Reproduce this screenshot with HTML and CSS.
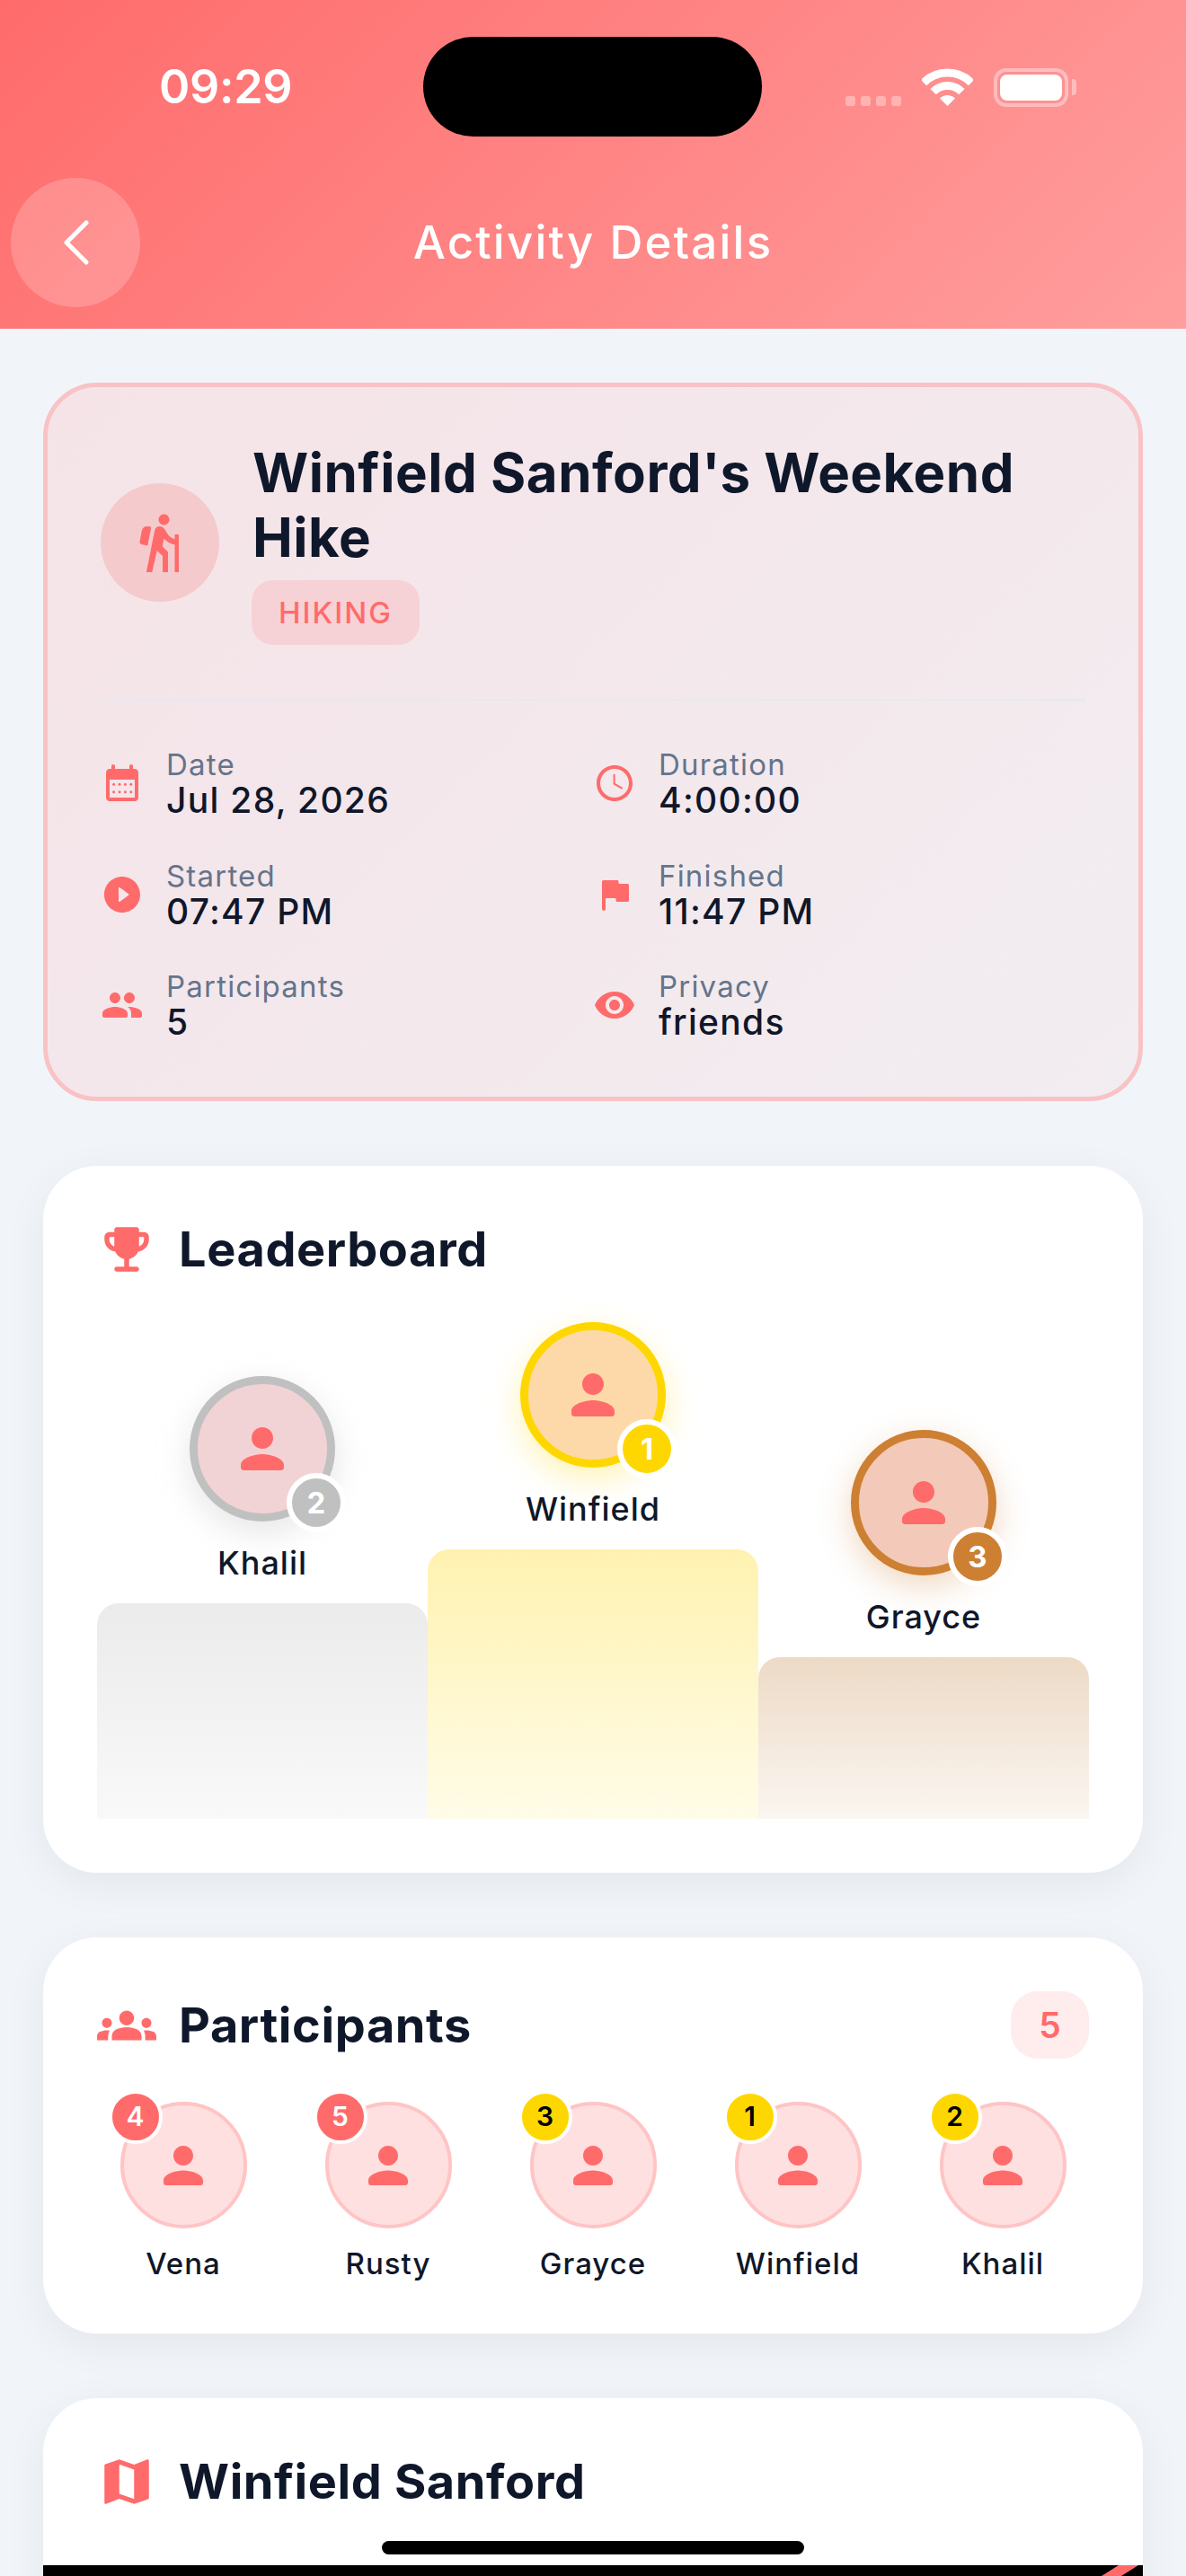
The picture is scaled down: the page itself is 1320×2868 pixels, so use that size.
FILE: index.html
```html
<!DOCTYPE html>
<html lang="en">
  <head>
    <meta charset="UTF-8" />
    <meta name="viewport" content="width=device-width, initial-scale=1.0" />
    <title>Activity Details</title>
    <link rel="stylesheet" href="styles.css">
  </head>
  <body>
    <div class="screen">
      <header class="top">
        <div class="status">
          <span class="time">09:29</span>
          <div class="status-icons">
            <div class="signal"><i></i><i></i><i></i><i></i></div>
            <svg class="wifi" viewBox="0 0 57 42" width="57" height="42">
              <path d="M2 16a37.5 37.5 0 0 1 53 0" fill="none" stroke="#fff" stroke-width="9"/>
              <path d="M12.6 26.100a22.500 22.500 0 0 1 31.800 0" fill="none" stroke="#fff" stroke-width="9"/>
              <path d="M28.500 42L20 33.500a12 12 0 0 1 17 0z" fill="#fff"/>
            </svg>
            <div class="battery"><div class="battery-fill"></div></div>
            <div class="battery-nub"></div>
          </div>
        </div>
        <div class="island"></div>
        <nav class="nav">
          <button class="back" type="button" aria-label="Back">
            <svg viewBox="0 0 144 144" width="144" height="144">
              <path d="M84 50L62 72l22 22" fill="none" stroke="#fff" stroke-width="5" stroke-linecap="round" stroke-linejoin="round"/>
            </svg>
          </button>
          <h1 class="nav-title">Activity Details</h1>
        </nav>
      </header>

      <main class="content">
        <section class="hero">
          <div class="hero-head">
            <div class="hero-icon">
              <svg viewBox="0 0 24 24" width="72" height="72"><path d="M13.500 5.500c1.100 0 2-.9 2-2s-.9-2-2-2-2 .9-2 2 .9 2 2 2zM17.500 10.780c-1.230-.37-2.220-1.170-2.800-2.180l-1-1.600c-.41-.65-1.110-1-1.840-1-.78 0-1.590.5-1.780 1.440S7 23 7 23h2.100l1.800-8 2.100 2v6h2v-7.500l-2.100-2 .6-3c1 1.150 2.410 2.010 4 2.340V23H19V9h-1.500v1.780zM7.430 13.130l-2.120-.41c-.54-.11-.9-.63-.79-1.170l.76-3.930c.21-1.080 1.260-1.790 2.340-1.580l1.160.23-1.350 6.860z"/></svg>
            </div>
            <div class="hero-text">
              <h2 class="hero-title">Winfield Sanford's Weekend Hike</h2>
              <span class="type-badge">HIKING</span>
            </div>
          </div>
          <div class="hero-grid">
            <div class="fact">
              <svg viewBox="0 0 24 24" width="48" height="48"><path fill-rule="evenodd" d="M19 4h-1V2.500a1 1 0 0 0-2 0V4H8V2.500a1 1 0 0 0-2 0V4H5c-1.110 0-2 .9-2 2v14c0 1.100.89 2 2 2h14c1.100 0 2-.9 2-2V6c0-1.100-.9-2-2-2zm0 16H5V10h14v10z"/><circle cx="7.300" cy="12.600" r=".75"/><circle cx="10.500" cy="12.600" r=".75"/><circle cx="13.700" cy="12.600" r=".75"/><circle cx="16.900" cy="12.600" r=".75"/><circle cx="7.300" cy="16.900" r=".75"/><circle cx="10.500" cy="16.900" r=".75"/><circle cx="13.700" cy="16.900" r=".75"/><circle cx="16.900" cy="16.900" r=".75"/></svg>
              <div><div class="fact-label">Date</div><div class="fact-value">Jul 28, 2026</div></div>
            </div>
            <div class="fact">
              <svg viewBox="0 0 24 24" width="48" height="48"><path d="M11.990 2C6.470 2 2 6.480 2 12s4.470 10 9.990 10C17.520 22 22 17.520 22 12S17.520 2 11.990 2zM12 20c-4.420 0-8-3.580-8-8s3.580-8 8-8 8 3.580 8 8-3.580 8-8 8zm.3-13h-1v5.600l4.700 2.800.6-.9-4.300-2.500z"/></svg>
              <div><div class="fact-label">Duration</div><div class="fact-value">4:00:00</div></div>
            </div>
            <div class="fact">
              <svg viewBox="0 0 24 24" width="48" height="48"><path d="M12 2C6.480 2 2 6.480 2 12s4.480 10 10 10 10-4.480 10-10S17.520 2 12 2zm-2 13.500v-7c0-.4.460-.63.800-.4l4.700 3.500c.27.2.27.6 0 .8l-4.700 3.500c-.34.23-.8 0-.8-.4z"/></svg>
              <div><div class="fact-label">Started</div><div class="fact-value">07:47 PM</div></div>
            </div>
            <div class="fact">
              <svg viewBox="0 0 24 24" width="48" height="48"><path d="M14.400 6L14 4H5.800a.8.8 0 0 0-.8.800V20a1 1 0 0 0 2 0v-6h5.600l.4 2h6.200a.8.8 0 0 0 .8-.8V6.800a.8.8 0 0 0-.8-.8z"/></svg>
              <div><div class="fact-label">Finished</div><div class="fact-value">11:47 PM</div></div>
            </div>
            <div class="fact">
              <svg viewBox="0 0 24 24" width="48" height="48"><path d="M16 11c1.660 0 2.990-1.340 2.990-3S17.660 5 16 5c-1.660 0-3 1.340-3 3s1.340 3 3 3zm-8 0c1.660 0 2.990-1.340 2.990-3S9.660 5 8 5C6.340 5 5 6.340 5 8s1.340 3 3 3zm0 2c-2.330 0-7 1.170-7 3.500V18c0 .55.45 1 1 1h12c.55 0 1-.45 1-1v-1.500c0-2.330-4.670-3.500-7-3.500zm8 0c-.29 0-.62.02-.97.05 1.160.84 1.970 1.970 1.970 3.450V19h5c.55 0 1-.45 1-1v-1.500c0-2.330-4.670-3.500-7-3.500z"/></svg>
              <div><div class="fact-label">Participants</div><div class="fact-value">5</div></div>
            </div>
            <div class="fact">
              <svg viewBox="0 0 24 24" width="48" height="48"><path d="M12 4.500C7 4.500 2.730 7.610 1 12c1.730 4.390 6 7.500 11 7.500s9.270-3.110 11-7.500c-1.730-4.390-6-7.500-11-7.500zM12 17c-2.760 0-5-2.240-5-5s2.240-5 5-5 5 2.240 5 5-2.240 5-5 5zm0-8c-1.660 0-3 1.340-3 3s1.340 3 3 3 3-1.340 3-3-1.340-3-3-3z"/></svg>
              <div><div class="fact-label">Privacy</div><div class="fact-value">friends</div></div>
            </div>
          </div>
        </section>

        <section class="card">
          <div class="card-head">
            <svg viewBox="0 0 24 24" width="66" height="66"><path d="M19 5h-2V4c0-.55-.45-1-1-1H8c-.55 0-1 .45-1 1v1H5c-1.100 0-2 .9-2 2v1c0 2.550 1.920 4.630 4.390 4.940.63 1.500 1.980 2.630 3.610 2.960V19H8c-.55 0-1 .45-1 1s.45 1 1 1h8c.55 0 1-.45 1-1s-.45-1-1-1h-3v-3.100c1.630-.33 2.980-1.460 3.610-2.960C19.080 12.630 21 10.550 21 8V7c0-1.100-.9-2-2-2zM5 8V7h2v3.820C5.840 10.400 5 9.300 5 8zm14 0c0 1.300-.84 2.400-2 2.820V7h2v1z"/></svg>
            <h2>Leaderboard</h2>
          </div>
          <div class="podium">
            <div class="step silver">
              <div class="lead-avatar">
                <svg viewBox="0 0 24 24" width="72" height="72"><path d="M12 12c2.210 0 4-1.790 4-4s-1.790-4-4-4-4 1.790-4 4 1.790 4 4 4zm0 2c-2.670 0-8 1.340-8 4v1c0 .55.45 1 1 1h14c.55 0 1-.45 1-1v-1c0-2.660-5.330-4-8-4z"/></svg>
                <span class="lead-rank">2</span>
              </div>
              <div class="lead-name">Khalil</div>
              <div class="bar"></div>
            </div>
            <div class="step gold">
              <div class="lead-avatar">
                <svg viewBox="0 0 24 24" width="72" height="72"><path d="M12 12c2.210 0 4-1.790 4-4s-1.790-4-4-4-4 1.790-4 4 1.790 4 4 4zm0 2c-2.670 0-8 1.340-8 4v1c0 .55.45 1 1 1h14c.55 0 1-.45 1-1v-1c0-2.660-5.330-4-8-4z"/></svg>
                <span class="lead-rank">1</span>
              </div>
              <div class="lead-name">Winfield</div>
              <div class="bar"></div>
            </div>
            <div class="step bronze">
              <div class="lead-avatar">
                <svg viewBox="0 0 24 24" width="72" height="72"><path d="M12 12c2.210 0 4-1.790 4-4s-1.790-4-4-4-4 1.790-4 4 1.790 4 4 4zm0 2c-2.670 0-8 1.340-8 4v1c0 .55.45 1 1 1h14c.55 0 1-.45 1-1v-1c0-2.660-5.330-4-8-4z"/></svg>
                <span class="lead-rank">3</span>
              </div>
              <div class="lead-name">Grayce</div>
              <div class="bar"></div>
            </div>
          </div>
        </section>

        <section class="card">
          <div class="card-head people-head">
            <svg viewBox="0 0 24 24" width="66" height="66"><path d="M4 13c1.100 0 2-.9 2-2 0-1.100-.9-2-2-2s-2 .9-2 2c0 1.100.9 2 2 2zm1.130 1.100c-.37-.06-.74-.1-1.130-.1-.99 0-1.930.21-2.780.58C.48 14.900 0 15.620 0 16.430V18h4.500v-1.610c0-.83.23-1.610.63-2.290zM20 13c1.100 0 2-.9 2-2 0-1.100-.9-2-2-2s-2 .9-2 2c0 1.100.9 2 2 2zm4 3.430c0-.81-.48-1.530-1.220-1.850-.85-.37-1.790-.58-2.780-.58-.39 0-.76.04-1.130.1.4.68.63 1.460.63 2.290V18H24v-1.570zm-7.760-2.780c-1.170-.52-2.610-.9-4.240-.9-1.630 0-3.070.39-4.240.9C6.680 14.130 6 15.210 6 16.390V18h12v-1.610c0-1.180-.68-2.260-1.760-2.740zM12 12c1.660 0 3-1.340 3-3s-1.340-3-3-3-3 1.340-3 3 1.340 3 3 3z"/></svg>
            <h2>Participants</h2>
            <span class="count">5</span>
          </div>
          <div class="people">
            <div class="person">
              <div class="person-avatar">
                <svg viewBox="0 0 24 24" width="66" height="66"><path d="M12 12c2.210 0 4-1.790 4-4s-1.790-4-4-4-4 1.790-4 4 1.790 4 4 4zm0 2c-2.670 0-8 1.340-8 4v1c0 .55.45 1 1 1h14c.55 0 1-.45 1-1v-1c0-2.660-5.330-4-8-4z"/></svg>
                <span class="person-rank">4</span>
              </div>
              <div class="person-name">Vena</div>
            </div>
            <div class="person">
              <div class="person-avatar">
                <svg viewBox="0 0 24 24" width="66" height="66"><path d="M12 12c2.210 0 4-1.790 4-4s-1.790-4-4-4-4 1.790-4 4 1.790 4 4 4zm0 2c-2.670 0-8 1.340-8 4v1c0 .55.45 1 1 1h14c.55 0 1-.45 1-1v-1c0-2.660-5.330-4-8-4z"/></svg>
                <span class="person-rank">5</span>
              </div>
              <div class="person-name">Rusty</div>
            </div>
            <div class="person">
              <div class="person-avatar">
                <svg viewBox="0 0 24 24" width="66" height="66"><path d="M12 12c2.210 0 4-1.790 4-4s-1.790-4-4-4-4 1.790-4 4 1.790 4 4 4zm0 2c-2.670 0-8 1.340-8 4v1c0 .55.45 1 1 1h14c.55 0 1-.45 1-1v-1c0-2.660-5.330-4-8-4z"/></svg>
                <span class="person-rank top3">3</span>
              </div>
              <div class="person-name">Grayce</div>
            </div>
            <div class="person">
              <div class="person-avatar">
                <svg viewBox="0 0 24 24" width="66" height="66"><path d="M12 12c2.210 0 4-1.790 4-4s-1.790-4-4-4-4 1.790-4 4 1.790 4 4 4zm0 2c-2.670 0-8 1.340-8 4v1c0 .55.45 1 1 1h14c.55 0 1-.45 1-1v-1c0-2.660-5.330-4-8-4z"/></svg>
                <span class="person-rank top3">1</span>
              </div>
              <div class="person-name">Winfield</div>
            </div>
            <div class="person">
              <div class="person-avatar">
                <svg viewBox="0 0 24 24" width="66" height="66"><path d="M12 12c2.210 0 4-1.790 4-4s-1.790-4-4-4-4 1.790-4 4 1.790 4 4 4zm0 2c-2.670 0-8 1.340-8 4v1c0 .55.45 1 1 1h14c.55 0 1-.45 1-1v-1c0-2.660-5.330-4-8-4z"/></svg>
                <span class="person-rank top3">2</span>
              </div>
              <div class="person-name">Khalil</div>
            </div>
          </div>
        </section>

        <section class="card map-card">
          <div class="card-head">
            <svg viewBox="0 0 24 24" width="66" height="66"><path d="M20.500 3l-.16.03L15 5.100 9 3 3.360 4.900c-.21.07-.36.25-.36.48V20.500c0 .28.22.5.5.5l.16-.03L9 18.900l6 2.100 5.640-1.900c.21-.07.36-.25.36-.48V3.500c0-.28-.22-.5-.5-.5zM15 19l-6-2.110V5l6 2.110V19z"/></svg>
            <h2>Winfield Sanford</h2>
          </div>
          <div class="map">
            <svg class="route" viewBox="0 0 1224 12" width="1224" height="12"><path d="M1197 0h22l-19 12h-22z" fill="#ff6b6b"/></svg>
          </div>
        </section>
      </main>

      <div class="home-bar"></div>
    </div>
  </body>
</html>
```

FILE: styles.css
```css
* {
  box-sizing: border-box;
}
html,
body {
  margin: 0;
  padding: 0;
}
body {
  font-family: Inter, "Noto Sans", sans-serif;
  color: #0f172a;
  background: #f1f5f9;
}
h1,
h2 {
  margin: 0;
}
svg {
  display: block;
  flex: none;
  fill: #ff6b6b;
}
.screen {
  position: relative;
  width: 1320px;
  height: 2868px;
  overflow: hidden;
  background: #f1f5f9;
}

/* header + status bar */
.top {
  height: 366px;
  background: linear-gradient(135deg, #ff6b6b, #ff9e9e);
  color: #fff;
}
.status {
  display: flex;
  align-items: center;
  height: 198px;
  padding: 0 122px 4px 177px;
}
.time {
  font-size: 52px;
  font-weight: 600;
  letter-spacing: -0.3px;
  line-height: 60px;
}
.status-icons {
  display: flex;
  align-items: center;
  margin-left: auto;
}
.signal {
  display: flex;
  align-self: flex-end;
  gap: 6px;
  margin: 0 23px 1px 0;
  opacity: 0.35;
}
.signal i {
  display: block;
  width: 11px;
  height: 11px;
  border-radius: 3px;
  background: #fff;
}
.wifi {
  fill: #fff;
}
.battery {
  width: 83px;
  height: 43px;
  margin-left: 23px;
  padding: 3px;
  border: 4px solid rgba(255, 255, 255, 0.4);
  border-radius: 14px;
}
.battery-fill {
  width: 100%;
  height: 100%;
  border-radius: 8px;
  background: #fff;
}
.battery-nub {
  width: 5px;
  height: 18px;
  margin-left: 4px;
  border-radius: 0 4px 4px 0;
  background: rgba(255, 255, 255, 0.4);
}
.island {
  position: absolute;
  top: 41px;
  left: 471px;
  width: 377px;
  height: 111px;
  border-radius: 56px;
  background: #000;
}
.nav {
  display: grid;
  grid-template-columns: 144px 1fr 144px;
  align-items: center;
  padding: 0 12px;
}
.back {
  width: 144px;
  height: 144px;
  padding: 0;
  border: 0;
  border-radius: 50%;
  background: rgba(255, 255, 255, 0.2);
}
.nav-title {
  font-size: 51px;
  font-weight: 500;
  letter-spacing: 2.2px;
  line-height: 60px;
  text-align: center;
}

.content {
  display: flex;
  flex-direction: column;
  gap: 72px;
  padding: 60px 48px;
}

/* activity summary */
.hero {
  padding: 59px;
  border: 5px solid #f9c2c5;
  border-radius: 60px;
  background: linear-gradient(135deg, #f5e3e7, #f2edf1);
}
.hero-head {
  display: flex;
  align-items: center;
  gap: 36px;
  padding-bottom: 60px;
  border-bottom: 3px solid #e9e9ef;
}
.hero-icon {
  display: flex;
  align-items: center;
  justify-content: center;
  flex: none;
  width: 132px;
  height: 132px;
  border-radius: 50%;
  background: #f5cacd;
}
.hero-title {
  margin-left: 1px;
  font-size: 60px;
  font-weight: 700;
  letter-spacing: 0.5px;
  line-height: 72px;
}
.type-badge {
  display: inline-block;
  height: 72px;
  margin-top: 12px;
  padding: 0 30px;
  border-radius: 24px;
  background: #f6d2d6;
  color: #ff6b6b;
  font-size: 33px;
  font-weight: 500;
  letter-spacing: 2px;
  line-height: 72px;
}
.hero-grid {
  display: grid;
  grid-template-columns: 1fr 1fr;
  row-gap: 41.5px;
  margin: 50px 0 2px;
}
.fact {
  display: flex;
  align-items: center;
  gap: 25px;
}
.fact-label {
  color: #64748b;
  font-size: 33px;
  letter-spacing: 1.2px;
  line-height: 40px;
}
.fact-value {
  margin-top: -2px;
  font-size: 39px;
  font-weight: 500;
  letter-spacing: 1.3px;
  line-height: 44px;
}

/* white sections */
.card {
  padding: 60px;
  border-radius: 60px;
  background: #fff;
  box-shadow: 0 12px 48px rgba(15, 23, 42, 0.06);
}
.card-head {
  display: flex;
  align-items: center;
  gap: 25px;
}
.card-head h2 {
  font-size: 54px;
  font-weight: 700;
  letter-spacing: 0.6px;
  line-height: 66px;
}
.people-head {
  height: 75px;
}
.count {
  width: 87px;
  height: 75px;
  margin-left: auto;
  border-radius: 30px;
  background: #ffeded;
  color: #ff6b6b;
  font-size: 39px;
  font-weight: 600;
  line-height: 75px;
  text-align: center;
}

/* podium */
.podium {
  display: grid;
  grid-template-columns: repeat(3, 1fr);
  align-items: end;
  margin-top: 48px;
}
.step {
  display: flex;
  flex-direction: column;
  align-items: center;
}
.lead-avatar {
  position: relative;
  display: flex;
  align-items: center;
  justify-content: center;
  width: 162px;
  height: 162px;
  border: 9px solid;
  border-radius: 50%;
}
.lead-rank {
  position: absolute;
  right: -21px;
  bottom: -21px;
  width: 66px;
  height: 66px;
  border: 6px solid #fff;
  border-radius: 50%;
  color: #fff;
  font-size: 33px;
  font-weight: 700;
  line-height: 54px;
  text-align: center;
}
.lead-name {
  margin: 24px 0 23px;
  font-size: 36px;
  font-weight: 500;
  letter-spacing: 1px;
  line-height: 44px;
}
.bar {
  width: 100%;
  border-radius: 24px 24px 0 0;
}
.silver .lead-avatar {
  border-color: #c0c0c0;
  background: #f2d3d5;
  box-shadow: 0 12px 36px rgba(192, 192, 192, 0.4);
}
.silver .lead-rank {
  background: #c0c0c0;
}
.silver .bar {
  height: 240px;
  background: linear-gradient(#ebebeb, #f9f9f9);
}
.gold .lead-avatar {
  border-color: #ffd700;
  background: #fdd9a9;
  box-shadow: 0 12px 36px rgba(255, 215, 0, 0.3);
}
.gold .lead-rank {
  background: #ffd700;
}
.gold .bar {
  height: 300px;
  background: linear-gradient(#fff2b0, #fffce8);
}
.bronze .lead-avatar {
  border-color: #cd7f32;
  background: #f3c9b9;
  box-shadow: 0 12px 36px rgba(205, 127, 50, 0.3);
}
.bronze .lead-rank {
  background: #cd7f32;
}
.bronze .bar {
  height: 180px;
  background: linear-gradient(#eddac6, #fbf6f1);
}

/* participants */
.people {
  display: grid;
  grid-template-columns: repeat(5, 192px);
  gap: 36px;
  margin-top: 48px;
}
.person {
  display: flex;
  flex-direction: column;
  align-items: center;
}
.person-avatar {
  position: relative;
  display: flex;
  align-items: center;
  justify-content: center;
  width: 141px;
  height: 141px;
  border: 4.5px solid #ffc4c4;
  border-radius: 50%;
  background: #ffe0e1;
}
.person-rank {
  position: absolute;
  top: -17px;
  left: -17px;
  width: 60px;
  height: 60px;
  border: 4.5px solid #fff;
  border-radius: 50%;
  background: #ff6b6b;
  color: #fff;
  font-size: 30px;
  font-weight: 600;
  line-height: 51px;
  text-align: center;
}
.person-rank.top3 {
  background: #ffd700;
  color: #000;
}
.person-name {
  margin-top: 21px;
  font-size: 33px;
  font-weight: 500;
  letter-spacing: 1px;
  line-height: 36px;
}

/* map */
.map-card {
  height: 600px;
}
.map {
  position: relative;
  height: 480px;
  margin: 60px -60px 0;
  background: #000;
}
.route {
  position: absolute;
  top: 0;
  left: 0;
}

.home-bar {
  position: absolute;
  left: 425px;
  bottom: 24px;
  width: 470px;
  height: 15px;
  border-radius: 8px;
  background: #000;
}
```
